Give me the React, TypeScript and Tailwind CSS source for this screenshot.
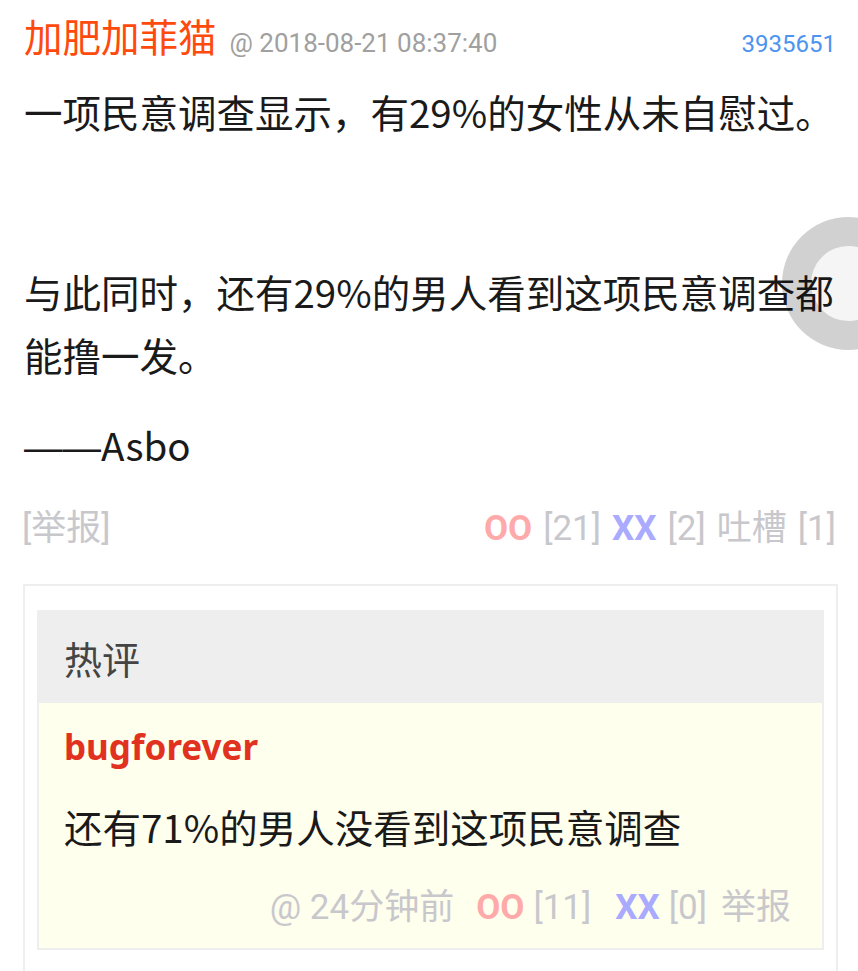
const meta = { fontFamily: 'Roboto, "Noto Sans CJK SC", sans-serif' };
const body = { fontFamily: '"Noto Sans CJK SC", "Noto Sans", sans-serif' };

export default function App() {
  return (
    <div className="relative w-[858px] min-h-[971px] overflow-hidden bg-white">
      {/* header */}
      <div className="flex items-baseline pl-[24px] pr-[22px] pt-[10px]" style={meta}>
        <span className="text-[38.5px] leading-[50px] text-[#ff4a0d]" style={body}>
          加肥加菲猫
        </span>
        <span className="ml-[13px] text-[26px] text-[#a0a0a0]">@ 2018-08-21 08:37:40</span>
        <span className="ml-auto text-[24px] text-[#4d94f0]">3935651</span>
      </div>

      {/* post body */}
      <div className="mt-[17px] pl-[24px] pr-[18px] text-[38.5px] leading-[63px] text-[#1a1a1a]" style={body}>
        <p>一项民意调查显示，有29%的女性从未自慰过。</p>
        <p className="mt-[27px]">&nbsp;</p>
        <p className="mt-[27px]">与此同时，还有29%的男人看到这项民意调查都能撸一发。</p>
        <p className="mt-[27px] h-[63px]">
          <span className="leading-none" style={{ fontFamily: '"Liberation Sans", sans-serif' }}>——</span>Asbo
        </p>
      </div>

      {/* actions */}
      <div className="mt-[33px] flex h-[40px] items-center justify-between px-[22px] text-[35px] text-[#c8c8cc]" style={meta}>
        <span>[举报]</span>
        <div className="flex items-center gap-[11px]">
          <span className="font-bold text-[#ffaaaa]">OO</span>
          <span>[21]</span>
          <span className="font-bold text-[#aaaaff]">XX</span>
          <span>[2]</span>
          <span>吐槽</span>
          <span>[1]</span>
        </div>
      </div>

      {/* hot comments */}
      <div className="ml-[23px] mr-[20px] mt-[35px] border-2 border-[#eeeeee] px-[12px] pt-[24px] pb-[40px]">
        <div className="border-2 border-[#eeeeee]">
          <div className="flex h-[91px] items-center bg-[#eeeeee] px-[25px] text-[38px] text-[#444444]" style={body}>
            热评
          </div>
          <div className="bg-[#ffffee] px-[25px] pt-[20px] pb-[20px]">
            <div className="text-[35px] font-bold leading-[48px] text-[#e0321f]" style={{ fontFamily: '"Noto Sans", sans-serif' }}>
              bugforever
            </div>
            <div className="mt-[30px] text-[38.5px] leading-[50px] text-[#1a1a1a]" style={body}>
              还有71%的男人没看到这项民意调查
            </div>
            <div className="mt-[37px] flex h-[40px] items-center justify-end pr-[6px] text-[35px] text-[#c8c8cc]" style={meta}>
              <span>@ 24分钟前</span>
              <span className="ml-[22px] font-bold text-[#ffaaaa]">OO</span>
              <span className="ml-[9px]">[11]</span>
              <span className="ml-[24px] font-bold text-[#aaaaff]">XX</span>
              <span className="ml-[9px]">[0]</span>
              <span className="ml-[14px]">举报</span>
            </div>
          </div>
        </div>
      </div>

      {/* floating scroll button */}
      <div className="absolute left-[782px] top-[217px] h-[133px] w-[133px] rounded-full border-[29px] border-[rgba(0,0,0,0.15)] bg-[rgba(0,0,0,0.04)]" />
    </div>
  );
}
